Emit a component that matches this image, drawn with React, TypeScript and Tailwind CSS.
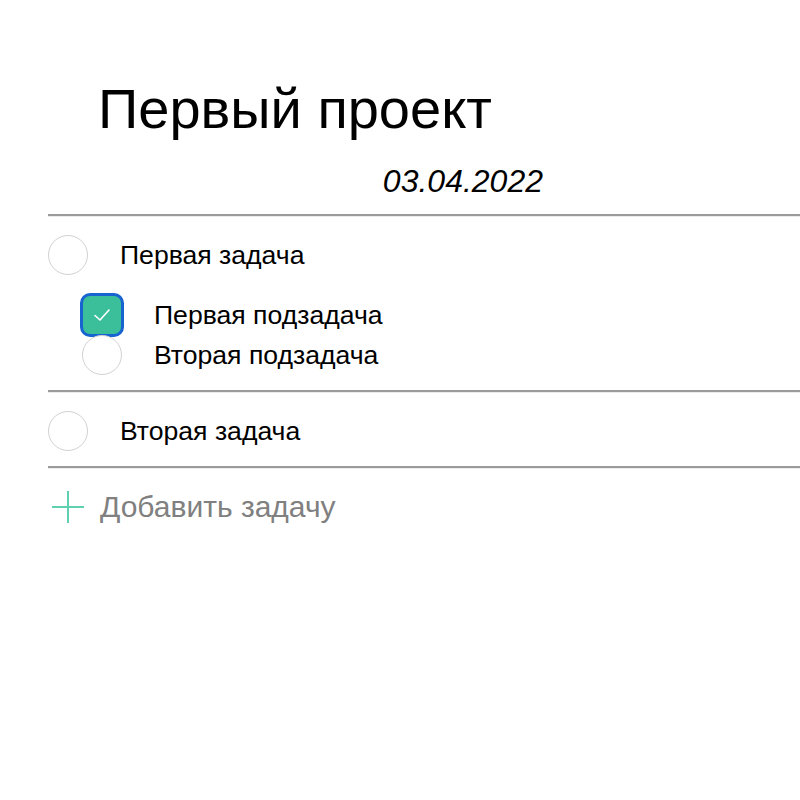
import React from "react";

const Line = () => (
  <div className="ml-[48px] h-[3px] border-t-2 border-b border-t-[#9b9b9b] border-b-[#ececec]" />
);

const Circle = () => (
  <div className="h-[40px] w-[40px] shrink-0 rounded-full border border-[#d2d2d2] bg-white" />
);

const Checked = () => (
  <div className="flex h-[40px] w-[40px] shrink-0 items-center justify-center rounded-[8px] bg-[#3bbf9b] outline-[3px] outline-solid outline-[#1764d0] outline-offset-[-1px]">
    <svg width="18" height="14" viewBox="0 0 18 14" fill="none">
      <path d="M2 7.5 L7 12 L16 2" stroke="white" strokeWidth="1.6" strokeLinecap="round" strokeLinejoin="round" />
    </svg>
  </div>
);

export default function App() {
  return (
    <div className="h-[800px] w-[800px] overflow-hidden bg-white text-black" style={{ fontFamily: '"Liberation Sans", Arial, sans-serif' }}>
      <div className="pl-[98px] pt-[81px] text-[56px] leading-[56px]">Первый проект</div>
      <div className="mt-[28px] w-[543px] text-right text-[32px] italic leading-[32px]">03.04.2022</div>
      <div className="mt-[17px]">
        <Line />
        <div className="ml-[48px] pt-[18px] pb-[15px]">
          <div className="flex items-center gap-[32px]">
            <Circle />
            <span className="text-[26.6px] leading-[30px]">Первая задача</span>
          </div>
          <div className="ml-[34px] mt-[20px] flex flex-col">
            <div className="flex h-[40px] items-center gap-[32px]">
              <Checked />
              <span className="text-[26.6px] leading-[30px]">Первая подзадача</span>
            </div>
            <div className="flex h-[40px] items-center gap-[32px]">
              <Circle />
              <span className="text-[26.6px] leading-[30px]">Вторая подзадача</span>
            </div>
          </div>
        </div>
        <Line />
        <div className="ml-[48px] pt-[18px] pb-[15px]">
          <div className="flex items-center gap-[32px]">
            <Circle />
            <span className="text-[26.6px] leading-[30px]">Вторая задача</span>
          </div>
        </div>
        <Line />
        <div className="ml-[52px] mt-[22px] flex items-center gap-[16px]">
          <svg width="32" height="32" viewBox="0 0 32 32" fill="none">
            <path d="M16 0 V32 M0 16 H32" stroke="#5fd0b0" strokeWidth="2" />
          </svg>
          <span className="text-[30px] leading-[32px] text-[#808080]">Добавить задачу</span>
        </div>
      </div>
    </div>
  );
}
